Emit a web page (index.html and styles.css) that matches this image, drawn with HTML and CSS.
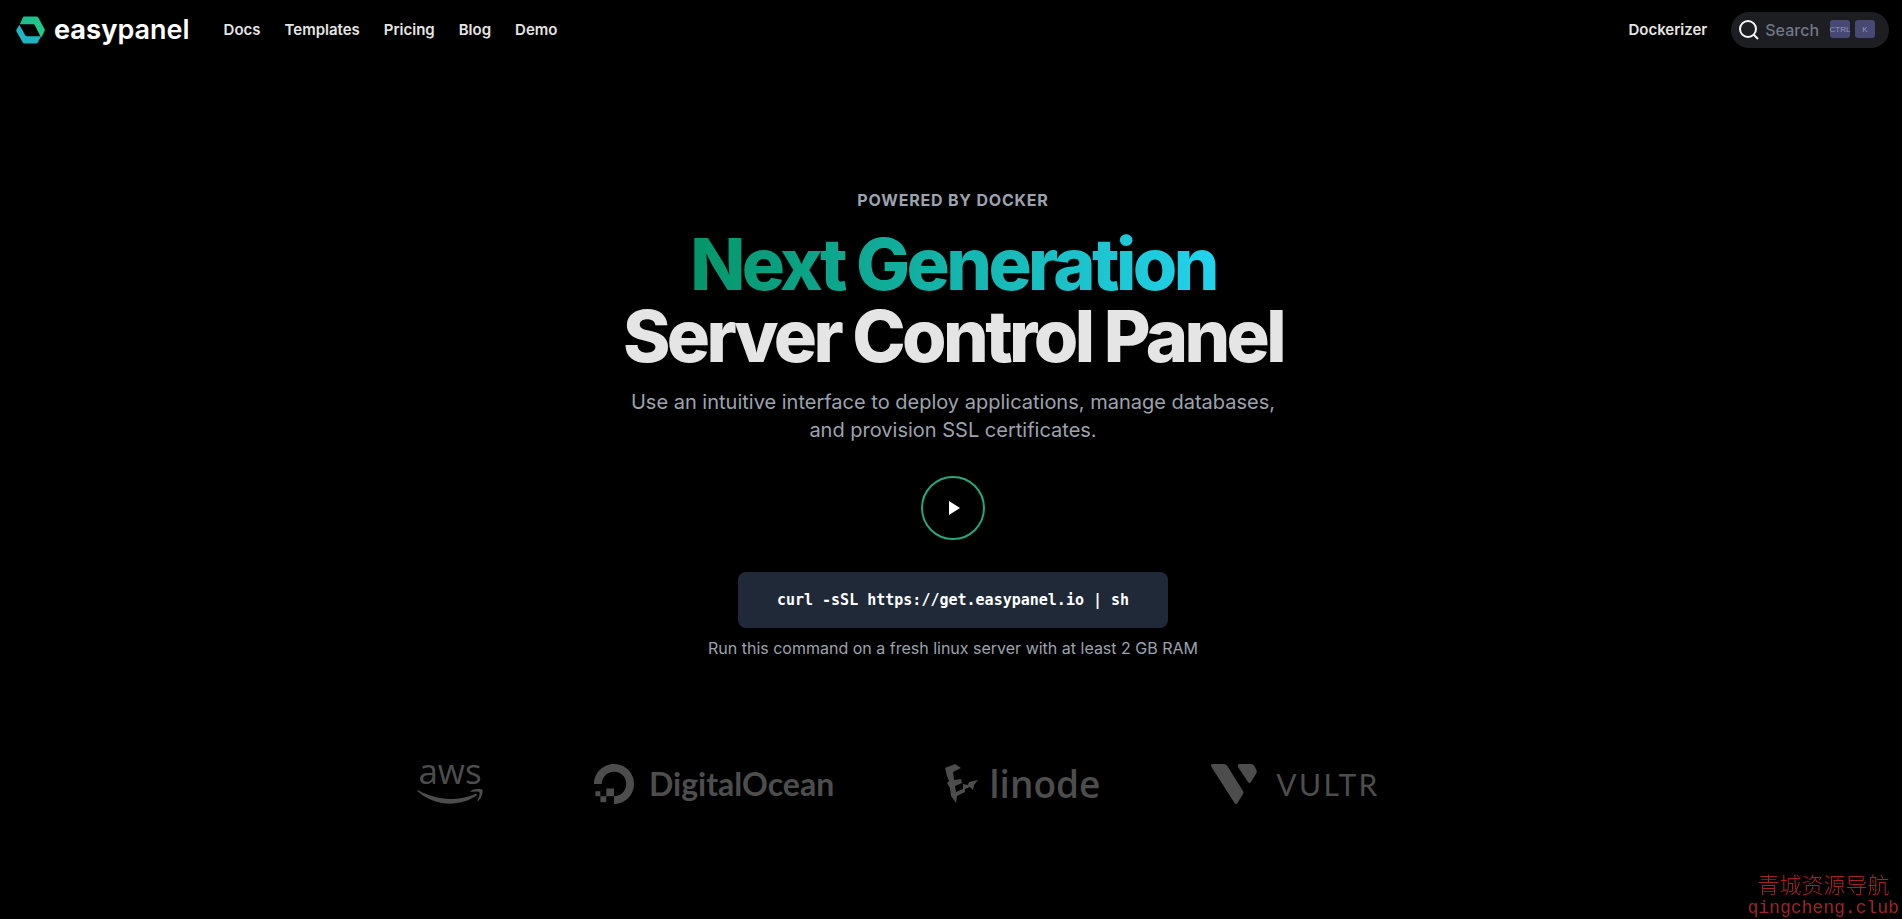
FILE: index.html
```html
<!DOCTYPE html>
<html lang="en">
<head>
  <meta charset="UTF-8" />
  <meta name="viewport" content="width=device-width, initial-scale=1.0"/>
  <title>Easypanel - Next Generation Server Control Panel</title>
  <link rel="stylesheet" href="styles.css">
</head>
<body>
  <header class="navbar">
    <a href="#" class="brand">
      <svg class="brand-mark" viewBox="0 0 30 28" aria-hidden="true">
        <defs>
          <linearGradient id="brandTop" x1="0" y1="0" x2="1" y2="1">
            <stop offset="0" stop-color="#22b98c"/>
            <stop offset="1" stop-color="#1fd08f"/>
          </linearGradient>
        </defs>
        <path fill="url(#brandTop)" d="M8.5 0H21Q22.5 0 23.2 1.2L29.5 13Q30 14 29.5 15L26 22L19.5 9Q19 8 18 8H4L7 1Q7.5 0 8.5 0Z"/>
        <path fill="#1cb5c4" d="M3.5 8.5L9.5 19.5Q10 20.5 11.5 20.5H26L22.5 27Q22 28 21 28H9Q7.5 28 7 27L.5 15.5Q0 14.5 .5 13.5Z"/>
      </svg>
      <span class="brand-name">easy<span class="brand-light">panel</span></span>
    </a>
    <nav class="nav-links">
      <a href="#">Docs</a>
      <a href="#">Templates</a>
      <a href="#">Pricing</a>
      <a href="#">Blog</a>
      <a href="#">Demo</a>
    </nav>
    <div class="nav-right">
      <a href="#">Dockerizer</a>
      <button type="button" class="search-btn">
        <svg class="search-icon" viewBox="0 0 20 20" aria-hidden="true">
          <circle cx="9" cy="9" r="8"/>
          <path d="M14.5 14.5L19 19"/>
        </svg>
        <span class="search-label">Search</span>
        <kbd>CTRL</kbd>
        <kbd>K</kbd>
      </button>
    </div>
  </header>

  <main>
    <!-- Hero -->
    <section class="hero">
      <p class="eyebrow">POWERED BY DOCKER</p>
      <h1><span class="gradient-text">Next Generation</span><br>Server Control Panel</h1>
      <p class="lead">Use an intuitive interface to deploy applications, manage databases, and provision SSL certificates.</p>
      <button type="button" class="play-btn" aria-label="Play video">
        <svg viewBox="0 0 12 14" aria-hidden="true"><path d="M0 0L11 7L0 14Z"/></svg>
      </button>
      <code class="command">curl -sSL https://get.easypanel.io | sh</code>
      <p class="note">Run this command on a fresh linux server with at least 2 GB RAM</p>
    </section>

    <!-- Hosting providers -->
    <section class="providers">
      <div class="provider aws">
        <span class="aws-name">aws</span>
        <svg class="aws-smile" viewBox="0 13.8 24 5.5" aria-hidden="true">
          <path d="M21.698 16.207c-2.626 1.94-6.442 2.969-9.722 2.969-4.598 0-8.74-1.7-11.87-4.526-.247-.223-.024-.527.272-.351 3.384 1.963 7.559 3.153 11.877 3.153 2.914 0 6.114-.607 9.06-1.852.439-.2.814.287.383.607zM22.792 14.961c-.336-.43-2.22-.207-3.074-.103-.255.032-.295-.192-.063-.36 1.5-1.053 3.967-.75 4.254-.399.287.36-.08 2.826-1.485 4.007-.215.184-.423.088-.327-.151.32-.79 1.03-2.57.695-2.994z"/>
        </svg>
      </div>
      <div class="provider">
        <svg class="do-mark" viewBox="0 0 24 24" aria-hidden="true">
          <path d="M12.04 0C5.408-.02.005 5.37.005 11.992h4.638c0-4.923 4.882-8.731 10.064-6.855a6.95 6.95 0 0 1 4.147 4.148c1.889 5.177-1.924 10.055-6.84 10.064v-4.61H7.391v4.623h4.61V24c7.86 0 13.967-7.588 11.397-15.83-1.115-3.59-3.985-6.446-7.575-7.575A12.8 12.8 0 0 0 12.039 0zM7.39 19.362H3.828v3.564H7.39zm-3.563 0v-2.978H.85v2.978z"/>
        </svg>
        <span class="do-name">DigitalOcean</span>
      </div>
      <div class="provider">
        <svg class="linode-mark" viewBox="0 0 34 40" aria-hidden="true">
          <path d="M0 4L10 0L16 4L8 8L9 16L16 15L17 19L10 22L11 28L18 25L18 20L23 21L24 18L33 16L29 21L28 26L25 23L20 25L20 28L12 32L11 39L6 32L5 24L2 19L4 17L2 12Z"/>
        </svg>
        <span class="linode-name">linode</span>
      </div>
      <div class="provider">
        <svg class="vultr-mark" viewBox="0 0 46 40" aria-hidden="true">
          <path d="M2 0H13Q15 0 16 1.5L32 27Q33 28.5 32 30L26.5 39Q25 41 23.5 39L.5 3Q-1 0 2 0Z"/>
          <path d="M29 0H40Q42 0 43 1.5L45.5 6Q46 7.5 45.5 9L40 18Q38.5 20 37 18L27 3Q26 0 29 0Z"/>
        </svg>
        <span class="vultr-name">VULTR</span>
      </div>
    </section>
  </main>

  <div class="watermark">
    <span class="watermark-title" lang="zh">青城资源导航</span>
    <span class="watermark-url">qingcheng.club</span>
  </div>
</body>
</html>
```
FILE: styles.css
```css
* {
  box-sizing: border-box;
}

body {
  margin: 0;
  min-height: 100vh;
  background-color: #000;
  color: #e5e5e5;
  font-family: Inter, sans-serif;
  font-size: 16px;
  line-height: 24px;
}

h1, p {
  margin: 0;
}

a {
  color: inherit;
  text-decoration: none;
}

.navbar {
  display: flex;
  align-items: center;
  height: 60px;
  padding: 0 13px 0 16px;
  font-size: 15px;
  font-weight: 600;
}

.brand {
  display: flex;
  align-items: center;
  gap: 9px;
  margin-right: 34px;
  color: #fff;
}

.brand-mark {
  width: 29px;
  height: 28px;
}

.brand-name {
  font-size: 27px;
  font-weight: 700;
}

.brand-light {
  font-weight: 600;
}

.nav-links {
  display: flex;
  gap: 24px;
}

.nav-right {
  display: flex;
  align-items: center;
  gap: 24px;
  margin-left: auto;
}

.search-btn {
  display: flex;
  align-items: center;
  height: 36px;
  padding: 0 14px 0 8px;
  border: none;
  border-radius: 18px;
  background-color: #1c1e21;
  font-family: inherit;
  font-size: 16px;
  font-weight: 500;
  cursor: pointer;
}

.search-icon {
  width: 20px;
  height: 20px;
  fill: none;
  stroke: #f5f6f7;
  stroke-width: 2;
}

.search-label {
  margin: 0 11px 0 6px;
  color: #727786;
}

kbd {
  display: flex;
  align-items: center;
  justify-content: center;
  width: 20px;
  height: 18px;
  margin-bottom: 2px;
  border-radius: 3px;
  background-color: #484875;
  color: #9496bc;
  font-family: "Liberation Sans Narrow", "Liberation Sans", sans-serif;
  font-size: 8px;
  font-weight: 400;
}

kbd + kbd {
  margin-left: 5px;
}

.hero {
  display: flex;
  flex-direction: column;
  align-items: center;
  padding: 128px 16px 0 20px;
  text-align: center;
}

.eyebrow {
  color: #9ca3af;
  font-weight: 700;
  letter-spacing: 0.05em;
}

h1 {
  margin-top: 16px;
  font-size: 72px;
  font-weight: 800;
  line-height: 72px;
  letter-spacing: -0.05em;
}

.gradient-text {
  background: linear-gradient(to right, #059669, #22d3ee);
  -webkit-background-clip: text;
  background-clip: text;
  color: transparent;
}

.lead {
  max-width: 672px;
  margin-top: 16px;
  color: #9ca3af;
  font-size: 20px;
  line-height: 28px;
}

.play-btn {
  display: flex;
  align-items: center;
  justify-content: center;
  width: 64px;
  height: 64px;
  margin-top: 32px;
  padding: 0 0 0 4px;
  border: 2px solid #26a77d;
  border-radius: 50%;
  background: none;
  cursor: pointer;
}

.play-btn svg {
  width: 12px;
  height: 14px;
  fill: #fff;
}

.command {
  margin-top: 32px;
  padding: 16px 39px;
  border-radius: 8px;
  background-color: #1f2937;
  color: #fff;
  font-family: "DejaVu Sans Mono", monospace;
  font-size: 15px;
  font-weight: 700;
  line-height: 24px;
}

.note {
  margin-top: 8px;
  color: #9ca3af;
}

.providers {
  display: flex;
  flex-wrap: wrap;
  gap: 32px 111px;
  max-width: 1068px;
  margin: 104px auto 0;
  color: #4d4d4d;
}

.provider {
  display: flex;
  align-items: center;
  height: 40px;
}

.provider svg {
  flex-shrink: 0;
  fill: currentColor;
}

.aws {
  flex-direction: column;
}

.aws-name {
  margin-bottom: 11px;
  font-family: "Open Sans", sans-serif;
  font-size: 35px;
  font-weight: 500;
  line-height: 14px;
}

.aws-smile {
  width: 66px;
  height: 15px;
}

.do-mark {
  width: 40px;
  height: 40px;
}

.do-name {
  margin-left: 15px;
  font-family: Lato, sans-serif;
  font-size: 32px;
  font-weight: 700;
}

.linode-mark {
  width: 34px;
  height: 40px;
}

.linode-name {
  margin-left: 10px;
  font-family: "Open Sans", sans-serif;
  font-size: 37px;
  font-weight: 600;
}

.vultr-mark {
  width: 46px;
  height: 40px;
}

.vultr-name {
  margin-left: 19px;
  font-family: Lato, sans-serif;
  font-size: 30px;
  letter-spacing: 0.08em;
}

.watermark {
  position: fixed;
  right: 3px;
  bottom: -1px;
  display: flex;
  flex-direction: column;
  align-items: center;
  color: #a52222;
  line-height: 23px;
}

.watermark-title {
  font-family: "Liberation Sans", "Noto Sans CJK SC", sans-serif;
  font-size: 22px;
  font-weight: 300;
}

.watermark-url {
  font-family: "Liberation Mono", monospace;
  font-size: 18px;
}
```
